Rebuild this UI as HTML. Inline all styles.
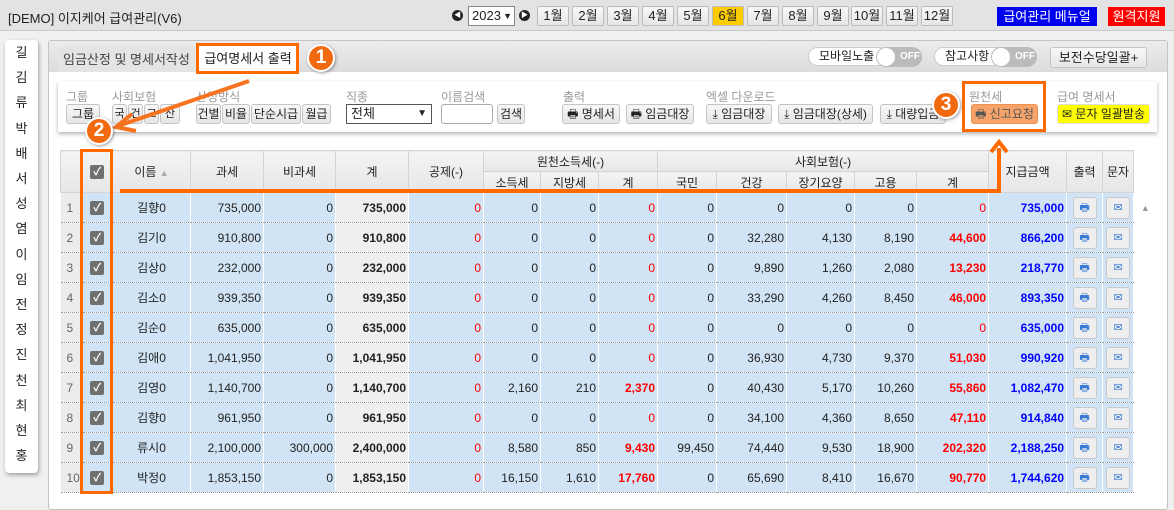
<!DOCTYPE html>
<html><head><meta charset="utf-8"><style>
*{box-sizing:border-box;margin:0;padding:0}
body{width:1174px;height:498px;overflow:hidden;background:#f0f0f0;font-family:"Liberation Sans","Noto Sans CJK KR",sans-serif;font-size:12px;color:#222;position:relative}
.abs{position:absolute}
.top{left:0;top:0;width:1174px;height:31px;background:#e3e3e3;border-bottom:1px solid #c8c8c8}
.btn{position:absolute;background:linear-gradient(#f8f8f8,#e6e6e6);border:1px solid #c4c4c4;border-radius:3px;text-align:center;font-size:12px;color:#222;white-space:nowrap;overflow:hidden}
.mon{top:6px;width:32px;height:20px;line-height:18px;font-size:13px;border-color:#bbb;border-radius:2px}
.lbl{position:absolute;top:88px;color:#999;font-size:12px}
.tb{top:104px;height:20px;line-height:18px}
table{border-collapse:collapse;table-layout:fixed;position:absolute;left:60px;top:150px;width:1098px}
td,th{height:30px;font-size:12px;font-weight:normal;white-space:nowrap;overflow:hidden}
th{background:linear-gradient(#f4f4f4,#e6e6e6);border:1px solid #d4d4d4;color:#222;height:21px}
td{background:#d1e4f5;border-bottom:1px dotted #999;border-right:1px dotted #fff;text-align:right;padding-right:2px}
td.n{background:#ececec;color:#666;text-align:left;padding-left:6px;border-right:none}
td.g{background:#efefef;font-weight:bold}
td.c{text-align:center;padding:0}
td.r{color:#f00}
td.rb{color:#f00;font-weight:bold}
td.b{color:#00f;font-weight:bold}
td.s{background:#fff;border:none}
.cb{display:inline-block;width:14px;height:14px;background:#707070;border-radius:2px;color:#fff;font-size:11px;line-height:14px;text-align:center;font-weight:bold}
.ib{display:inline-block;width:24px;height:22px;border:1px solid #c8c8c8;border-radius:3px;background:#eee;vertical-align:middle;line-height:20px;font-size:11px;color:#3a7bd5}
.circ{position:absolute;width:28px;height:28px;border-radius:50%;background:#f26a10;border:2px solid #fff;box-shadow:1px 1px 3px rgba(0,0,0,.4);color:#fff;font-weight:bold;font-size:19px;line-height:24px;text-align:center}
.or{position:absolute;border:3px solid #ff6a00}
.tog{position:absolute;top:47px;height:19px;border:1px solid #ccc;border-radius:10px;background:#fff;font-size:12px;line-height:17px;padding-left:10px}
.sw{position:absolute;top:47px;width:46px;height:20px;border-radius:10px;background:#bbb;color:#fff;font-weight:bold;font-size:10px;line-height:20px;padding-left:24px}
.sw:before{content:"";position:absolute;left:1px;top:1px;width:18px;height:18px;border-radius:50%;background:#fff}
</style></head><body>
<div class="abs top"></div>
<div class="abs" style="left:8px;top:8px;font-size:13px">[DEMO] 이지케어 급여관리(V6)</div>
<div class="abs" style="left:452px;top:10px;width:11px;height:11px;border-radius:50%;background:#222;color:#fff;font-size:7px;line-height:11px;text-align:center">◀</div>
<div class="abs" style="left:468px;top:6px;width:47px;height:20px;border:1px solid #888;background:#fff;font-size:13px;line-height:18px;padding-left:3px;white-space:nowrap;overflow:hidden">2023<span style="position:absolute;right:2px;top:0;font-size:9px;font-weight:bold">▼</span></div>
<div class="abs" style="left:519px;top:10px;width:11px;height:11px;border-radius:50%;background:#222;color:#fff;font-size:7px;line-height:11px;text-align:center">▶</div>
<div class="btn mon" style="left:537px">1월</div><div class="btn mon" style="left:572px">2월</div><div class="btn mon" style="left:607px">3월</div><div class="btn mon" style="left:642px">4월</div><div class="btn mon" style="left:677px">5월</div><div class="btn mon" style="left:712px;background:#ffcc00">6월</div><div class="btn mon" style="left:747px">7월</div><div class="btn mon" style="left:782px">8월</div><div class="btn mon" style="left:817px">9월</div><div class="btn mon" style="left:851px">10월</div><div class="btn mon" style="left:886px">11월</div><div class="btn mon" style="left:921px">12월</div>
<div class="abs" style="left:997px;top:7px;width:100px;height:19px;background:#0000f0;color:#fff;font-size:13px;line-height:19px;text-align:center">급여관리 메뉴얼</div>
<div class="abs" style="left:1108px;top:7px;width:57px;height:19px;background:#f00;color:#fff;font-size:13px;line-height:19px;text-align:center">원격지원</div>

<div class="abs" style="left:5px;top:40px;width:33px;height:433px;background:#fff;border-radius:4px;box-shadow:1px 2px 4px rgba(0,0,0,.35);text-align:center;font-size:13px;line-height:25.2px;padding-top:0">길<br>김<br>류<br>박<br>배<br>서<br>성<br>염<br>이<br>임<br>전<br>정<br>진<br>천<br>최<br>현<br>홍</div>

<div class="abs" style="left:48px;top:40px;width:1120px;height:470px;background:#fff;border:1px solid #c4c4c4;border-radius:3px"></div>
<div class="abs" style="left:49px;top:41px;width:1118px;height:31px;background:linear-gradient(#ececec,#dcdcdc)"></div>
<div class="abs" style="left:58px;top:47px;width:138px;height:25px;background:#e4e4e4;border-radius:3px 3px 0 0;font-size:13px;line-height:25px;padding-left:5px;color:#444">임금산정 및 명세서작성</div>
<div class="abs" style="left:198px;top:46px;width:100px;height:26px;background:#fff;font-size:13px;line-height:26px;text-align:center">급여명세서 출력</div>
<div class="tog" style="left:808px;width:80px">모바일노출</div><div class="sw" style="left:876px">OFF</div>
<div class="tog" style="left:934px;width:76px">참고사항</div><div class="sw" style="left:991px">OFF</div>
<div class="btn" style="left:1050px;top:47px;width:97px;height:21px;line-height:19px;font-size:13px">보전수당일괄+</div>

<div class="abs" style="left:58px;top:81px;width:1099px;height:51px;background:#fff;box-shadow:0 2px 4px rgba(0,0,0,.3)"></div>
<div class="lbl" style="left:66px">그룹</div><div class="lbl" style="left:112px">사회보험</div><div class="lbl" style="left:196px">산정방식</div><div class="lbl" style="left:346px">직종</div><div class="lbl" style="left:441px">이름검색</div><div class="lbl" style="left:563px">출력</div><div class="lbl" style="left:706px">엑셀 다운로드</div><div class="lbl" style="left:969px">원천세</div><div class="lbl" style="left:1057px">급여 명세서</div>
<div class="btn tb" style="left:66px;width:34px">그룹</div>
<div class="btn tb" style="left:112px;width:15px;font-size:11px">국</div><div class="btn tb" style="left:128px;width:15px;font-size:11px">건</div><div class="btn tb" style="left:144px;width:15px;font-size:11px">고</div><div class="btn tb" style="left:160px;width:20px;font-size:11px">산</div>
<div class="btn tb" style="left:196px;width:25px">건별</div><div class="btn tb" style="left:222px;width:28px">비율</div><div class="btn tb" style="left:251px;width:50px">단순시급</div><div class="btn tb" style="left:302px;width:29px">월급</div>
<div class="abs" style="left:346px;top:104px;width:86px;height:20px;border:1px solid #555;background:#fff;font-size:13px;line-height:18px;padding-left:4px">전체<span style="position:absolute;right:4px;font-size:10px">▼</span></div>
<div class="abs" style="left:441px;top:104px;width:52px;height:20px;border:1px solid #aaa;border-radius:3px;background:#fff"></div>
<div class="btn tb" style="left:497px;width:28px">검색</div>
<div class="btn tb" style="left:562px;width:58px">🖶 명세서</div><div class="btn tb" style="left:626px;width:68px">🖶 임금대장</div>
<div class="btn tb" style="left:706px;width:66px">⤓ 임금대장</div><div class="btn tb" style="left:778px;width:95px">⤓ 임금대장(상세)</div><div class="btn tb" style="left:880px;width:66px">⤓ 대량입금</div>
<div class="btn tb" style="left:971px;width:67px;background:#f7a46a;border-color:#f09050;color:#555">🖶 신고요청</div>
<div class="btn tb" style="left:1057px;width:93px;background:#ffff00;border-color:#ddd">✉ 문자 일괄발송</div>

<table>
<colgroup><col style="width:22px"><col style="width:30px"><col style="width:78px"><col style="width:73px"><col style="width:72px"><col style="width:73px"><col style="width:75px"><col style="width:57px"><col style="width:58px"><col style="width:59px"><col style="width:59px"><col style="width:70px"><col style="width:68px"><col style="width:62px"><col style="width:72px"><col style="width:78px"><col style="width:36px"><col style="width:31px"><col style="width:25px"></colgroup>
<tr><th rowspan="2" style="border-right:none"></th><th rowspan="2" style="border-left:none"><span class="cb">✓</span></th><th rowspan="2">이름 <span style="color:#aaa;font-size:9px">▲</span></th><th rowspan="2">과세</th><th rowspan="2">비과세</th><th rowspan="2">계</th><th rowspan="2">공제(-)</th><th colspan="3">원천소득세(-)</th><th colspan="5">사회보험(-)</th><th rowspan="2">지급금액</th><th rowspan="2">출력</th><th rowspan="2">문자</th><th rowspan="2" style="background:#fff;border:none"></th></tr>
<tr><th>소득세</th><th>지방세</th><th>계</th><th>국민</th><th>건강</th><th>장기요양</th><th>고용</th><th>계</th></tr>
<tr><td class="n">1</td><td class="c"><span class="cb">✓</span></td><td class="c">길향0</td><td>735,000</td><td>0</td><td class="g">735,000</td><td class="r">0</td><td>0</td><td>0</td><td class="r">0</td><td>0</td><td>0</td><td>0</td><td>0</td><td class="r">0</td><td class="b">735,000</td><td class="c"><span class="ib">🖶</span></td><td class="c"><span class="ib">✉</span></td><td class="s" style="text-align:center;color:#999;font-size:9px">▲</td></tr>
<tr><td class="n">2</td><td class="c"><span class="cb">✓</span></td><td class="c">김기0</td><td>910,800</td><td>0</td><td class="g">910,800</td><td class="r">0</td><td>0</td><td>0</td><td class="r">0</td><td>0</td><td>32,280</td><td>4,130</td><td>8,190</td><td class="rb">44,600</td><td class="b">866,200</td><td class="c"><span class="ib">🖶</span></td><td class="c"><span class="ib">✉</span></td><td class="s"></td></tr>
<tr><td class="n">3</td><td class="c"><span class="cb">✓</span></td><td class="c">김상0</td><td>232,000</td><td>0</td><td class="g">232,000</td><td class="r">0</td><td>0</td><td>0</td><td class="r">0</td><td>0</td><td>9,890</td><td>1,260</td><td>2,080</td><td class="rb">13,230</td><td class="b">218,770</td><td class="c"><span class="ib">🖶</span></td><td class="c"><span class="ib">✉</span></td><td class="s"></td></tr>
<tr><td class="n">4</td><td class="c"><span class="cb">✓</span></td><td class="c">김소0</td><td>939,350</td><td>0</td><td class="g">939,350</td><td class="r">0</td><td>0</td><td>0</td><td class="r">0</td><td>0</td><td>33,290</td><td>4,260</td><td>8,450</td><td class="rb">46,000</td><td class="b">893,350</td><td class="c"><span class="ib">🖶</span></td><td class="c"><span class="ib">✉</span></td><td class="s"></td></tr>
<tr><td class="n">5</td><td class="c"><span class="cb">✓</span></td><td class="c">김순0</td><td>635,000</td><td>0</td><td class="g">635,000</td><td class="r">0</td><td>0</td><td>0</td><td class="r">0</td><td>0</td><td>0</td><td>0</td><td>0</td><td class="r">0</td><td class="b">635,000</td><td class="c"><span class="ib">🖶</span></td><td class="c"><span class="ib">✉</span></td><td class="s"></td></tr>
<tr><td class="n">6</td><td class="c"><span class="cb">✓</span></td><td class="c">김애0</td><td>1,041,950</td><td>0</td><td class="g">1,041,950</td><td class="r">0</td><td>0</td><td>0</td><td class="r">0</td><td>0</td><td>36,930</td><td>4,730</td><td>9,370</td><td class="rb">51,030</td><td class="b">990,920</td><td class="c"><span class="ib">🖶</span></td><td class="c"><span class="ib">✉</span></td><td class="s"></td></tr>
<tr><td class="n">7</td><td class="c"><span class="cb">✓</span></td><td class="c">김영0</td><td>1,140,700</td><td>0</td><td class="g">1,140,700</td><td class="r">0</td><td>2,160</td><td>210</td><td class="rb">2,370</td><td>0</td><td>40,430</td><td>5,170</td><td>10,260</td><td class="rb">55,860</td><td class="b">1,082,470</td><td class="c"><span class="ib">🖶</span></td><td class="c"><span class="ib">✉</span></td><td class="s"></td></tr>
<tr><td class="n">8</td><td class="c"><span class="cb">✓</span></td><td class="c">김향0</td><td>961,950</td><td>0</td><td class="g">961,950</td><td class="r">0</td><td>0</td><td>0</td><td class="r">0</td><td>0</td><td>34,100</td><td>4,360</td><td>8,650</td><td class="rb">47,110</td><td class="b">914,840</td><td class="c"><span class="ib">🖶</span></td><td class="c"><span class="ib">✉</span></td><td class="s"></td></tr>
<tr><td class="n">9</td><td class="c"><span class="cb">✓</span></td><td class="c">류시0</td><td>2,100,000</td><td>300,000</td><td class="g">2,400,000</td><td class="r">0</td><td>8,580</td><td>850</td><td class="rb">9,430</td><td>99,450</td><td>74,440</td><td>9,530</td><td>18,900</td><td class="rb">202,320</td><td class="b">2,188,250</td><td class="c"><span class="ib">🖶</span></td><td class="c"><span class="ib">✉</span></td><td class="s"></td></tr>
<tr><td class="n">10</td><td class="c"><span class="cb">✓</span></td><td class="c">박정0</td><td>1,853,150</td><td>0</td><td class="g">1,853,150</td><td class="r">0</td><td>16,150</td><td>1,610</td><td class="rb">17,760</td><td>0</td><td>65,690</td><td>8,410</td><td>16,670</td><td class="rb">90,770</td><td class="b">1,744,620</td><td class="c"><span class="ib">🖶</span></td><td class="c"><span class="ib">✉</span></td><td class="s"></td></tr>
</table>

<div class="or" style="left:196px;top:43px;width:103px;height:31px"></div>
<div class="circ" style="left:307px;top:44px">1</div>
<div class="or" style="left:80px;top:149px;width:33px;height:345px"></div>
<div class="or" style="left:962px;top:81px;width:84px;height:51px"></div>
<div class="circ" style="left:932px;top:91px">3</div>
<div class="abs" style="left:120px;top:189px;width:880px;height:4px;background:#ff6a00"></div>
<div class="abs" style="left:997px;top:148px;width:4px;height:45px;background:#ff6a00"></div>
<svg class="abs" style="left:0;top:0" width="1174" height="498"><path d="M991 152 L999 142 L1007 152" fill="none" stroke="#ff6a00" stroke-width="4"/><line x1="249" y1="81" x2="118" y2="126" stroke="#f7731f" stroke-width="4"/><path d="M132 114 L116 127 L136 131" fill="none" stroke="#f7731f" stroke-width="4"/></svg>
<div class="circ" style="left:85px;top:117px">2</div>
</body></html>
